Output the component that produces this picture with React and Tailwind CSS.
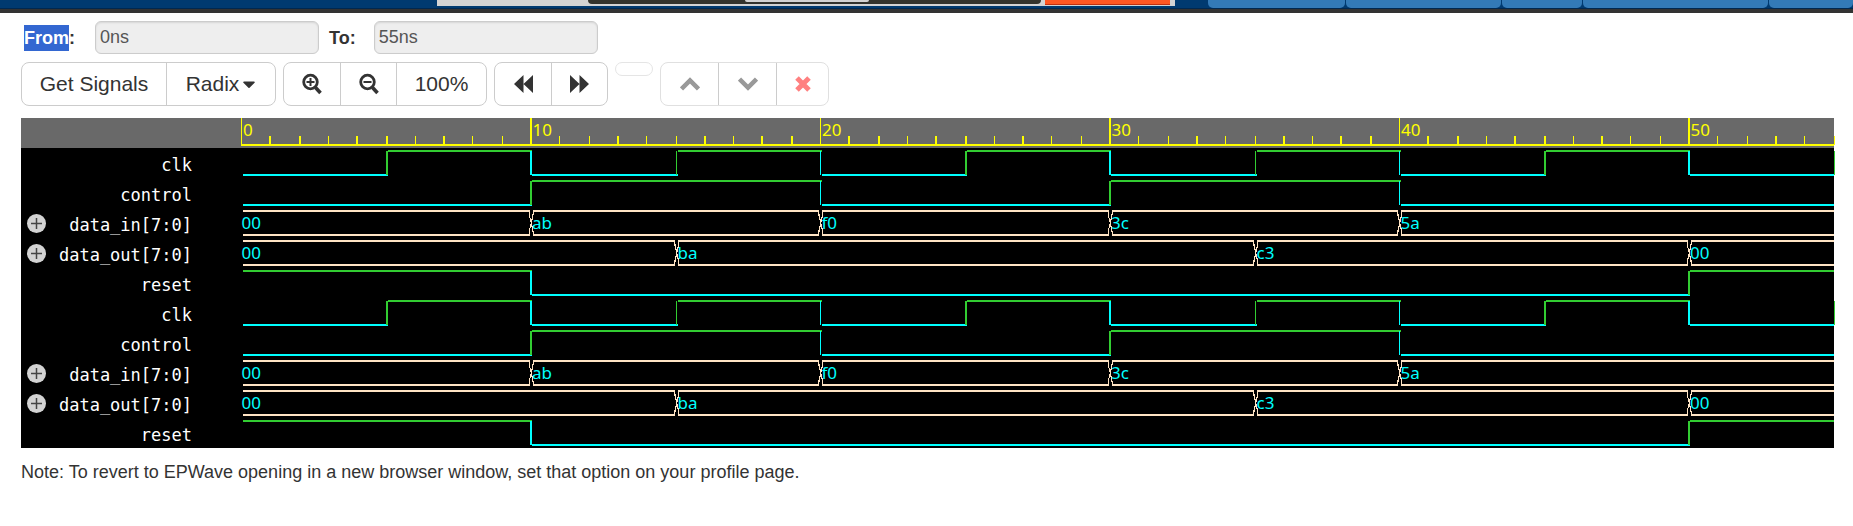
import { FaCaretDown } from "react-icons/fa";

const SPAN = 1062;
const END = 55;
const ROW = 30;
const pos = (t) => (Math.round(t * 19.3) / SPAN) * 100 + "%";
const segmentEnd = (t) => (t === END ? "99.9%" : pos(t));

const LOW = "#00ffff";
const HIGH = "#32cd32";
const BUS = "#ffe4c4";

const group = [
  { name: "clk", bits: [[0, 0], [5, 1], [10, 0], [15, 1], [20, 0], [25, 1], [30, 0], [35, 1], [40, 0], [45, 1], [50, 0], [55, 1]] },
  { name: "control", bits: [[0, 0], [10, 1], [20, 0], [30, 1], [40, 0]] },
  { name: "data_in[7:0]", values: [[0, "00"], [10, "ab"], [20, "f0"], [30, "3c"], [40, "5a"]] },
  { name: "data_out[7:0]", values: [[0, "00"], [15, "ba"], [35, "c3"], [50, "00"]] },
  { name: "reset", bits: [[0, 1], [10, 0], [50, 1]] },
];
const signals = [...group, ...group];

function BitWave({ bits, y }) {
  return (
    <>
      <g transform={`translate(1.7 ${y})`} strokeWidth="2">
        {bits.map(([t, v], i) => {
          const end = i + 1 < bits.length ? bits[i + 1][0] : END;
          const h = v ? 3 : 27;
          return end > t && <line key={t} x1={pos(t)} x2={segmentEnd(end)} y1={h} y2={h} stroke={v ? HIGH : LOW} />;
        })}
      </g>
      <g transform={`translate(0.5 ${y})`} strokeWidth="1.5">
        {bits.slice(1).map(([t, v]) => (
          <line key={t} x1={pos(t)} x2={pos(t)} y1="3" y2="27" stroke={v ? HIGH : LOW} />
        ))}
      </g>
    </>
  );
}

function BusWave({ values, y }) {
  return (
    <>
      <g transform={`translate(1.7 ${y})`} stroke={BUS} strokeWidth="2">
        <line x1="0" x2={segmentEnd(END)} y1="3" y2="3" />
        <line x1="0" x2={segmentEnd(END)} y1="27" y2="27" />
      </g>
      <g transform={`translate(0.5 ${y})`}>
        {values.map(([t, v], i) => (
          <svg key={t} x={pos(t)} overflow="visible">
            {i > 0 && (
              <>
                <path d="M-1.5 1h3v28h-3z" fill="#000" />
                <path d="M-2 3Q-1.5 10 .5 15Q-1.5 20 -2 27M2.5 3Q2 10 0 15Q2 20 2.5 27" fill="none" stroke={BUS} strokeWidth="1.2" />
              </>
            )}
            <text x={i > 0 ? 1 : 0} y="21" fill={LOW}>{v}</text>
          </svg>
        ))}
      </g>
    </>
  );
}

function Waves() {
  const ticks = Array.from({ length: END + 1 }, (_, t) => t);
  return (
    <svg
      className="h-[330px] min-w-0 flex-1 overflow-visible font-['Noto_Sans',sans-serif] text-[17px]"
      shapeRendering="crispEdges"
      role="img"
      aria-label="Waveforms"
    >
      <g transform="translate(0.5 0)" stroke="#ff0" strokeWidth="1.5">
        {ticks.map((t) => (
          <line key={t} x1={pos(t)} x2={pos(t)} y1={t % 10 ? 18 : 0} y2="27" />
        ))}
      </g>
      <line x1="0" x2="100%" y1="27" y2="27" stroke="#ff0" strokeWidth="2" />
      <g transform="translate(2 0)" fill="#ff0">
        {ticks.filter((t) => t % 10 === 0).map((t) => (
          <text key={t} x={pos(t)} y="18">{t}</text>
        ))}
      </g>
      {signals.map((s, i) =>
        s.bits ? (
          <BitWave key={i} bits={s.bits} y={ROW * (i + 1)} />
        ) : (
          <BusWave key={i} values={s.values} y={ROW * (i + 1)} />
        )
      )}
    </svg>
  );
}

const btn = "flex h-[42px] items-center justify-center border-[#ccc] text-[21px] leading-[24px] text-[#333] not-first:border-l";
const grp = "flex overflow-hidden rounded-[8px] border border-[#ccc] bg-white";

function Magnifier({ plus }) {
  return (
    <svg width="20" height="22" viewBox="0 0 20 22" fill="none" stroke="#333">
      <circle cx="8.5" cy="9" r="6.8" strokeWidth="2.8" />
      <path d="M13.5 14.5l5 5.5" strokeWidth="3.6" />
      <path d={plus ? "M4.5 9h8M8.5 5v8" : "M4.5 9h8"} strokeWidth="2" />
    </svg>
  );
}

function Field({ id, label, value }) {
  return (
    <>
      <label htmlFor={id} className="font-bold">{label}</label>
      <input
        id={id}
        readOnly
        defaultValue={value}
        className="h-[33px] w-[224px] rounded-[6px] border border-[#ccc] bg-[#eee] px-[4px] text-[18px] text-[#555] shadow-[inset_0_1px_2px_rgba(0,0,0,0.1)] outline-none"
      />
    </>
  );
}

function TopEdge() {
  const tabs = ["w-[137px]", "w-[155px]", "w-[80px]", "w-[185px]", "flex-1"];
  return (
    <header className="border-b-[4px] border-[#333]">
      <div className="flex h-[9px] border-b border-[#002850] bg-[#003a70]">
        <div className="w-[437px] shrink-0" />
        <div className="flex h-[6px] w-[738px] shrink-0 bg-[#d3d3d3] pl-[151px]">
          <div className="flex h-[4px] w-[453px] justify-center rounded-b-[4px] bg-[#33332d]">
            <div className="mr-[16px] h-[2px] w-[124px] rounded-b-[4px] bg-[#d3d3d3]" />
          </div>
          <div className="ml-[4px] h-[5px] w-[125px] border-b border-[#c03010] bg-[#ff5722]" />
        </div>
        <div className="ml-[33px] flex flex-1 gap-px">
          {tabs.map((w) => (
            <div key={w} className={`h-[8px] rounded-b-[5px] bg-[#337ab7] ${w}`} />
          ))}
        </div>
      </div>
    </header>
  );
}

export default function App() {
  return (
    <div className="bg-white font-['Liberation_Sans',Arial,sans-serif] text-[18px] leading-[26px] text-[#333]">
      <TopEdge />
      <main className="pt-[8px] pr-[19px] pl-[21px]">
        <div className="flex items-center pl-[3px]">
          <div className="flex items-center gap-[20px]">
            <Field id="from" label={<><span className="inline-block bg-[#3367d1] text-white">From</span>:</>} value="0ns" />
          </div>
          <div className="ml-[10px] flex items-center gap-[18px]">
            <Field id="to" label="To:" value="55ns" />
          </div>
        </div>

        <div className="mt-[8px] flex items-start gap-[7px]">
          <div className={grp}>
            <button className={`${btn} w-[144px]`}>Get Signals</button>
            <button className={`${btn} w-[109px] gap-[3px]`}>
              Radix <FaCaretDown className="size-[20px] w-[14px]" />
            </button>
          </div>
          <div className={grp}>
            <button aria-label="Zoom in" className={`${btn} w-[56px]`}><Magnifier plus /></button>
            <button aria-label="Zoom out" className={`${btn} w-[56px]`}><Magnifier /></button>
            <button className={`${btn} w-[90px]`}>100%</button>
          </div>
          <div className={grp}>
            <button aria-label="Previous edge" className={`${btn} w-[56px]`}>
              <svg width="19" height="18" viewBox="0 0 19 18" fill="#333"><path d="M9.5 0v18L0 9zM19 0v18L9.5 9z" /></svg>
            </button>
            <button aria-label="Next edge" className={`${btn} w-[56px]`}>
              <svg width="19" height="18" viewBox="0 0 19 18" fill="#333"><path d="M0 0v18L9.5 9zM9.5 0v18L19 9z" /></svg>
            </button>
          </div>
          <div className="h-[14px] w-[38px] rounded-[7px] border border-[#e5e5e5]" />
          <div className="flex overflow-hidden rounded-[8px] border border-[#e0e0e0]">
            <button disabled aria-label="Move up" className={`${btn} w-[57px]`}>
              <svg width="20" height="14" viewBox="0 0 20 14" fill="none" stroke="#999" strokeWidth="4.5"><path d="M1.5 12L10 3.5L18.5 12" /></svg>
            </button>
            <button disabled aria-label="Move down" className={`${btn} w-[58px]`}>
              <svg width="20" height="14" viewBox="0 0 20 14" fill="none" stroke="#999" strokeWidth="4.5"><path d="M1.5 2L10 10.5L18.5 2" /></svg>
            </button>
            <button disabled aria-label="Remove" className={`${btn} w-[52px]`}>
              <svg width="16" height="16" viewBox="0 0 16 16" fill="none" stroke="#ff8080" strokeWidth="5"><path d="M2 2L14 14M14 2L2 14" /></svg>
            </button>
          </div>
        </div>

        <div className="mt-[12px] flex bg-[linear-gradient(#696969_30px,#000_30px)]">
          <ul className="w-[220px] shrink-0 pt-[30px] font-['DejaVu_Sans_Mono',monospace] text-[17px] text-white">
            {signals.map((s, i) => (
              <li key={i} className="flex h-[30px] items-center justify-between pr-[49px] pl-[6px]">
                {s.values ? (
                  <button aria-label={`Expand ${s.name}`} className="flex size-[19px] items-center justify-center rounded-full bg-[#d3d3d3]">
                    <svg width="11" height="11" viewBox="0 0 11 11" stroke="#444" strokeWidth="1.5"><path d="M0 5.5h11M5.5 0v11" /></svg>
                  </button>
                ) : (
                  <span />
                )}
                <span className="pt-[4px]">{s.name}</span>
              </li>
            ))}
          </ul>
          <Waves />
        </div>

        <p className="mt-[11px]">Note: To revert to EPWave opening in a new browser window, set that option on your profile page.</p>
      </main>
    </div>
  );
}
